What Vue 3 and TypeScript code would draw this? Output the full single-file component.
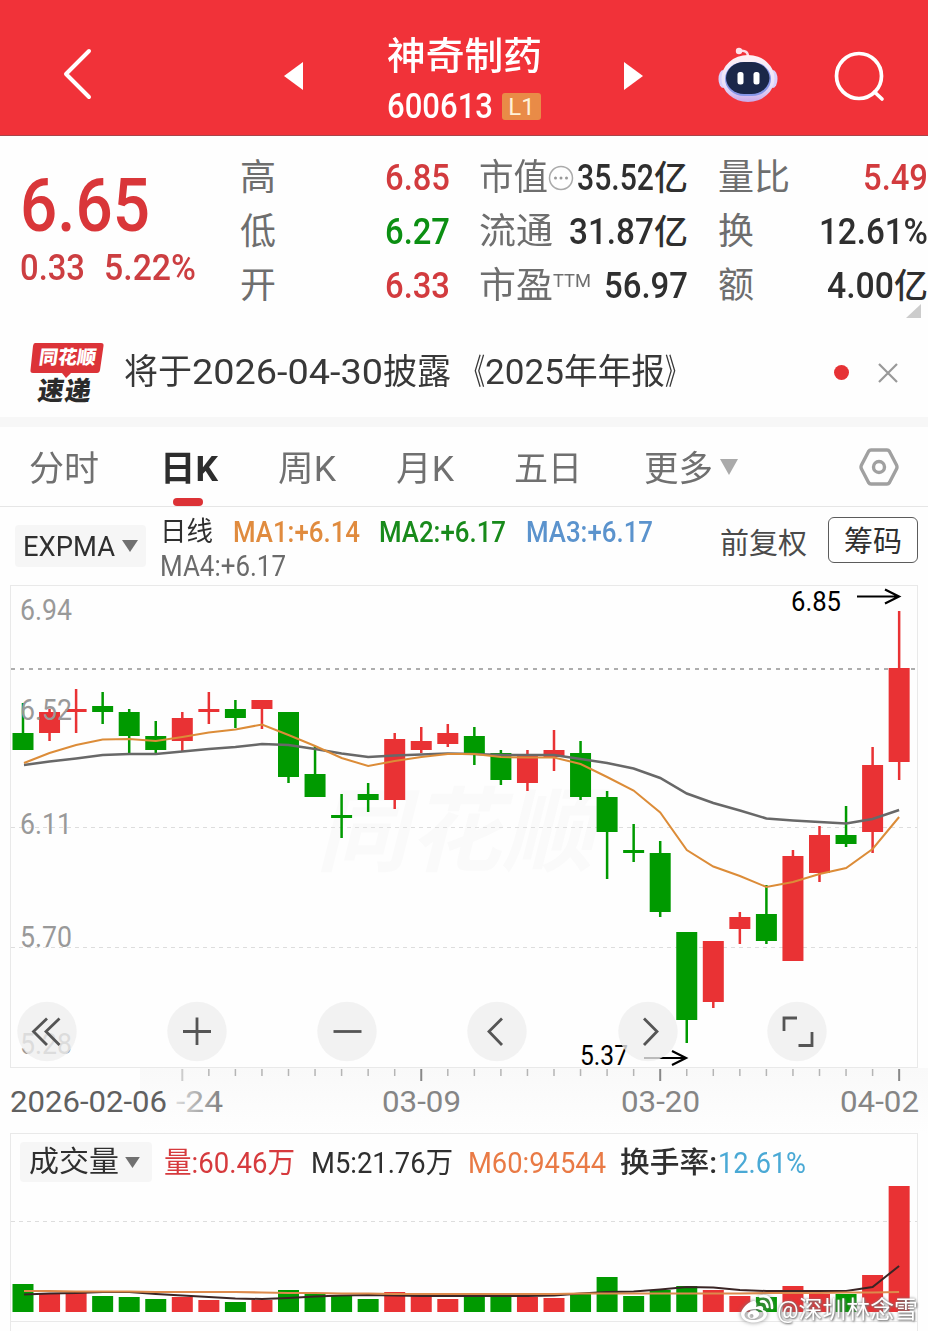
<script setup lang="ts">
type Candle = { up: boolean; top: number; bottom: number; high: number; low: number; vol: number }

// Scales a run of text horizontally so that it occupies the given width in the flow.
const vFit = {
  mounted(el: HTMLElement, binding: { value: number }) {
    const natural = el.getBoundingClientRect().width
    el.style.transform = `scaleX(${binding.value / natural})`
    el.style.marginRight = `${binding.value - natural}px`
  },
}

const rows: [number, number, number, number, number, number][] = [
  [0, 733, 750, 703, 750, 1284], [1, 712, 733, 709, 741, 1293], [1, 709, 712, 689, 733, 1293],
  [0, 706, 712, 692, 724, 1296], [0, 712, 736, 709, 753, 1297], [0, 736, 750, 721, 753, 1299],
  [1, 718, 741, 712, 751, 1297], [1, 709, 712, 692, 724, 1300], [0, 709, 718, 700, 728, 1302],
  [1, 700, 709, 700, 729, 1300], [0, 712, 777, 712, 783, 1290], [0, 774, 797, 746, 797, 1293],
  [0, 815, 818, 794, 838, 1296], [0, 794, 800, 783, 812, 1299], [1, 739, 800, 733, 809, 1292],
  [1, 741, 750, 727, 753, 1296], [1, 733, 744, 724, 747, 1299], [0, 736, 755, 727, 765, 1297],
  [0, 753, 780, 750, 785, 1296], [1, 754, 783, 750, 791, 1297], [1, 750, 757, 730, 771, 1298],
  [0, 753, 797, 741, 800, 1293], [0, 797, 832, 791, 879, 1277], [0, 850, 853, 824, 862, 1296],
  [0, 853, 912, 841, 917, 1290], [0, 932, 1020, 932, 1043, 1286], [1, 941, 1002, 941, 1008, 1290],
  [1, 917, 929, 912, 944, 1296], [0, 914, 941, 885, 944, 1297], [1, 856, 961, 850, 961, 1286],
  [1, 835, 873, 826, 882, 1294], [0, 835, 844, 806, 847, 1294], [1, 765, 832, 747, 853, 1275],
  [1, 668, 762, 611, 780, 1186],
]
const candles: Candle[] = rows.map(([up, top, bottom, high, low, vol]) => ({ up: up === 1, top, bottom, high, low, vol }))
const cx = (i: number) => 23 + i * 26.55
const color = (up: boolean) => (up ? '#e93234' : '#009a00')
const line = (ys: number[]) => ys.map((y, i) => `${(i ? cx(i) : 24).toFixed(1)},${y}`).join(' ')

const fast = line([763, 753, 745, 739.5, 739, 741, 737, 732.5, 729.5, 724.5, 735, 746, 758, 766, 761, 757, 754, 754, 757, 757.5, 757.5, 764, 777, 790.5, 812.5, 850, 866.5, 876, 887, 882, 874, 868, 849, 817])
const slow = line([765, 761.5, 758.5, 755, 754, 754, 751.5, 749, 747, 744, 745, 749, 753.5, 757, 755.5, 754.5, 753.5, 754, 755, 755, 755, 759, 763, 768.5, 778, 793.5, 803, 810.5, 818.5, 820.5, 822, 823.5, 819, 810])
const vol5 = line([1294.5, 1293.5, 1293, 1292, 1292, 1294, 1295.5, 1297, 1298.5, 1299, 1298, 1296.5, 1295.5, 1295, 1295.5, 1296, 1296, 1296, 1296, 1296, 1295.5, 1293.5, 1292, 1291.5, 1289.5, 1287, 1287.5, 1290, 1291, 1291, 1291, 1291, 1287, 1266])
const vol60 = line([1291, 1291, 1291.5, 1291.5, 1291.5, 1292, 1292, 1292, 1292, 1292.5, 1293, 1293, 1293.5, 1293.5, 1294, 1294, 1294, 1294, 1294, 1294, 1294, 1293.5, 1293.5, 1293.5, 1293.5, 1293.5, 1293.5, 1293.5, 1293, 1293, 1293, 1292.5, 1292.5, 1292])

const priceLabels = [
  { t: '6.94', y: 620 }, { t: '6.52', y: 720 }, { t: '6.11', y: 834 },
  { t: '5.70', y: 947 }, { t: '5.28', y: 1054 },
]
const ticks = Array.from({ length: 28 }, (_, k) => k + 6)
const dates = [{ t: '03-09', x: 383 }, { t: '03-20', x: 622 }, { t: '04-02', x: 841 }]

const news = [
  { t: '将于', w: 68 }, { t: '2026-04-30', w: 191 }, { t: '披露', w: 68 },
  { t: '《', w: 22, open: true }, { t: '2025', w: 79 }, { t: '年年报', w: 101 }, { t: '》', w: 22 },
]
const tabs = [
  { t: '分时', w: 70 }, { t: '日K', w: 58 }, { t: '周K', w: 58 },
  { t: '月K', w: 58 }, { t: '五日', w: 68 },
]
const tools = [
  'M47 1018.500L33.500 1031.500L47 1045M59.500 1018.500L46 1031.500L59.500 1045',
  'M183 1031.500H211M197 1017.500V1045',
  'M333.500 1031.500H361.500',
  'M502 1018.500L489 1031.500L502 1045',
  'M644 1018.500L657 1031.500L644 1045',
  'M784 1031V1018H797M798.500 1045.500H812V1032',
]
const centers = [47, 197, 347, 497, 648, 797]
</script>

<template>
  <main class="page">
    <header class="top">
      <svg class="back" width="32" height="54" viewBox="0 0 32 54"><path d="M29 4L6 27L29 50" /></svg>
      <svg class="tri" width="19" height="28" viewBox="0 0 19 28"><path d="M0 14L19 0V28Z" /></svg>
      <div class="stock">
        <div class="name"><span v-fit="155" class="fit">神奇制药</span></div>
        <div class="code"><span v-fit="106" class="fit">600613</span><b>L1</b></div>
      </div>
      <svg class="tri next" width="19" height="28" viewBox="0 0 19 28"><path d="M19 14L0 0V28Z" /></svg>
      <svg class="bot" width="60" height="56" viewBox="0 0 60 56">
        <defs>
          <linearGradient id="shell" x1="0" y1="0" x2="0" y2="1"><stop offset="0" stop-color="#fff2f5" /><stop offset=".65" stop-color="#e9dff9" /><stop offset="1" stop-color="#c9a9e8" /></linearGradient>
        </defs>
        <path d="M21 4Q31 2 30 12" fill="none" stroke="#ffd9e4" stroke-width="2.500" />
        <circle cx="21" cy="4" r="3.200" fill="#ffe2ea" />
        <ellipse cx="5" cy="32" rx="4.500" ry="9" fill="#d9d0fb" />
        <ellipse cx="55" cy="32" rx="4.500" ry="9" fill="#d9d0fb" />
        <ellipse cx="30" cy="31.500" rx="26.500" ry="23.500" fill="url(#shell)" />
        <rect x="7" y="15" width="46" height="34" rx="19" fill="#8797e8" />
        <rect x="8" y="15" width="43.500" height="32" rx="18" fill="#1b2749" />
        <rect x="19.500" y="25" width="6" height="12.500" rx="2.500" fill="#fff" />
        <rect x="35.500" y="25" width="6" height="12.500" rx="2.500" fill="#fff" />
      </svg>
      <svg class="search" width="52" height="52" viewBox="0 0 52 52"><circle cx="25" cy="25" r="22.500" /><path d="M40.500 41L48 48" /></svg>
    </header>

    <section class="quote">
      <div class="last">
        <div class="price"><span v-fit="130" class="fit">6.65</span></div>
        <div class="delta"><span v-fit="65" class="fit">0.33</span><span v-fit="92" class="fit">5.22%</span></div>
      </div>
      <dl class="col c1">
        <div><dt>高</dt><dd class="red"><span v-fit="65" class="fit">6.85</span></dd></div>
        <div><dt>低</dt><dd class="green"><span v-fit="65" class="fit">6.27</span></dd></div>
        <div><dt>开</dt><dd class="red"><span v-fit="65" class="fit">6.33</span></dd></div>
      </dl>
      <dl class="col c2">
        <div>
          <dt><span v-fit="69" class="fit">市值</span><svg class="more" width="26" height="26" viewBox="0 0 26 26"><circle cx="13" cy="13" r="11.500" fill="none" stroke="#aaa" stroke-width="1.500" /><circle cx="7.500" cy="13" r="1.500" /><circle cx="13" cy="13" r="1.500" /><circle cx="18.500" cy="13" r="1.500" /></svg></dt>
          <dd><span v-fit="77" class="fit">35.52</span><i>亿</i></dd>
        </div>
        <div><dt><span v-fit="74" class="fit">流通</span></dt><dd><span v-fit="85" class="fit">31.87</span><i>亿</i></dd></div>
        <div><dt><span v-fit="74" class="fit">市盈</span><sup v-fit="38" class="fit">TTM</sup></dt><dd><span v-fit="84" class="fit">56.97</span></dd></div>
      </dl>
      <dl class="col c3">
        <div><dt>量比</dt><dd class="red"><span v-fit="65" class="fit">5.49</span></dd></div>
        <div><dt>换</dt><dd><span v-fit="109" class="fit">12.61%</span></dd></div>
        <div><dt>额</dt><dd><span v-fit="67" class="fit">4.00</span><i>亿</i></dd></div>
      </dl>
      <i class="corner"></i>
    </section>

    <section class="news">
      <div class="brand">
        <svg width="76" height="38" viewBox="0 0 76 38"><path d="M6 1H72Q75 1 74.500 4L71 28Q70.500 31 68 31H42L37 36L33 31H4Q1 31 1.500 28L4 4Q4.500 1 6 1Z" fill="#dc3338" /></svg>
        <span class="b1">同花顺</span><span class="b2">速递</span>
      </div>
      <p><span v-for="p in news" :key="p.t" v-fit="p.w" class="fit" :class="{ open: p.open }">{{ p.t }}</span></p>
      <i class="dot"></i>
      <svg class="close" width="22" height="22" viewBox="0 0 22 22"><path d="M2 2L20 20M20 2L2 20" /></svg>
    </section>

    <nav class="tabs">
      <a v-for="(t, i) in tabs" :key="t.t" :class="{ on: i === 1 }"><span v-fit="t.w" class="fit">{{ t.t }}</span></a>
      <a class="pick"><span v-fit="69" class="fit">更多</span><svg width="18" height="16" viewBox="0 0 18 16"><path d="M0 0H18L9 16Z" fill="#aaa" /></svg></a>
      <svg class="gear" width="40" height="40" viewBox="0 0 40 40"><path d="M12 3H28Q29.500 3 30.500 4.500L37.500 18Q38.500 20 37.500 22L30.500 35.500Q29.500 37 28 37H12Q10.500 37 9.500 35.500L2.500 22Q1.500 20 2.500 18L9.500 4.500Q10.500 3 12 3Z" /><circle cx="20" cy="20" r="5.500" /></svg>
    </nav>

    <section class="indicator">
      <button class="drop"><span v-fit="92" class="fit">EXPMA</span><svg width="16" height="12" viewBox="0 0 16 12"><path d="M0 0H16L8 12Z" /></svg></button>
      <div class="ma">
        <div><span v-fit="53" class="fit day">日线</span><span v-fit="127" class="fit m1">MA1:+6.14</span><span v-fit="127" class="fit m2">MA2:+6.17</span><span v-fit="127" class="fit m3">MA3:+6.17</span></div>
        <div><span v-fit="126" class="fit m4">MA4:+6.17</span></div>
      </div>
      <span class="adj">前复权</span>
      <button class="chips">筹码</button>
    </section>

    <section class="chart">
      <svg width="928" height="548" viewBox="0 585 928 548">
        <defs>
          <linearGradient id="fade" gradientUnits="userSpaceOnUse" x1="176" y1="0" x2="222" y2="0"><stop offset="0" stop-color="#ddd" /><stop offset=".35" stop-color="#bbb" /><stop offset="1" stop-color="#808080" /></linearGradient>
          <linearGradient id="shade" x1="0" y1="0" x2="0" y2="1"><stop offset="0" stop-color="#f9f9f9" /><stop offset="1" stop-color="#fefefe" /></linearGradient>
        </defs>
        <rect x="140" y="1068" width="788" height="65" fill="url(#shade)" />
        <text class="ghost" x="316" y="864" textLength="278">同花顺</text>
        <rect x="10.500" y="585.500" width="907" height="482" fill="none" stroke="#e9e9e9" />
        <path d="M11 827.500H917M11 947.500H917" stroke="#ddd" stroke-dasharray="4 4" />
        <path d="M11 669H917" stroke="#929292" stroke-width="1.500" stroke-dasharray="4 5" />
        <g v-for="(c, i) in candles" :key="i" :fill="color(c.up)">
          <rect :x="cx(i) - 1.250" :y="c.high" width="2.500" :height="c.low - c.high" />
          <rect :x="cx(i) - 10.500" :y="c.top" width="21" :height="c.bottom - c.top" />
        </g>
        <polyline :points="slow" fill="none" stroke="#686868" stroke-width="2.500" />
        <polyline :points="fast" fill="none" stroke="#dc8c38" stroke-width="2" />
        <text v-for="p in priceLabels" :key="p.t" class="num price-tag" x="20" :y="p.y" textLength="52" lengthAdjust="spacingAndGlyphs">{{ p.t }}</text>
        <text class="num note" x="791" y="611" textLength="50" lengthAdjust="spacingAndGlyphs">6.85</text>
        <path class="arrow" d="M857 596.500H899M885 589.500L899 596.500L885 603.500" />
        <text class="num note" x="580" y="1064.500" textLength="48" lengthAdjust="spacingAndGlyphs">5.37</text>
        <path class="arrow" d="M644 1058H686M672 1051L686 1058L672 1065" />
        <g v-for="(d, i) in tools" :key="d" class="tool">
          <circle :cx="centers[i]" cy="1031.500" r="29.700" />
          <path :d="d" />
        </g>
        <path v-for="i in ticks" :key="i" :d="`M${cx(i)} 1069V${i % 9 === 6 ? 1081 : 1076}`" :stroke="i === 6 ? '#ccc' : i % 9 === 6 ? '#888' : '#b5b5b5'" :stroke-width="i % 9 === 6 ? 2 : 1.500" />
        <text class="num date first" x="10" y="1112" textLength="157" lengthAdjust="spacingAndGlyphs">2026-02-06</text>
        <text class="num date" x="176" y="1112" textLength="47" lengthAdjust="spacingAndGlyphs" fill="url(#fade)">-24</text>
        <text v-for="d in dates" :key="d.t" class="num date" :x="d.x - 1" y="1112" textLength="79" lengthAdjust="spacingAndGlyphs" fill="#858585">{{ d.t }}</text>
      </svg>
    </section>

    <section class="volume">
      <div class="legend">
        <button class="drop vol"><span v-fit="90" class="fit">成交量</span><svg width="15" height="11" viewBox="0 0 16 12"><path d="M0 0H16L8 12Z" /></svg></button>
        <span v-fit="131" class="fit v1">量:60.46万</span>
        <span v-fit="142" class="fit v2">M5:21.76万</span>
        <span v-fit="138" class="fit v3">M60:94544</span>
        <span v-fit="97" class="fit v4">换手率:</span>
        <span v-fit="88" class="fit v5">12.61%</span>
      </div>
      <svg width="906" height="137" viewBox="11 1184 906 137">
        <path d="M11 1221.500H917" stroke="#ddd" stroke-dasharray="4 4" />
        <rect v-for="(c, i) in candles" :key="i" :x="cx(i) - 10.500" :y="c.vol" width="21" :height="1312 - c.vol" :fill="color(c.up)" />
        <polyline :points="vol5" fill="none" stroke="#3a2525" stroke-width="2" />
        <polyline :points="vol60" fill="none" stroke="#dd8a4c" stroke-width="2.200" />
      </svg>
    </section>
    <div class="below"></div>

    <div class="credit">
      <svg width="34" height="30" viewBox="0 0 34 30">
        <path fill-rule="evenodd" d="M13 7C8 8 1 15 1 20C1 26 8 28.500 14 28.500C21 28.500 27 24.500 27 20C27 17.500 25 16.500 23 16C24 12 21 11 16 13C17 9 16 6.500 13 7ZM14 15C20 14.500 23.500 17 23.500 20C23.500 23.500 19 26 13.500 26C8 26 4.500 24 4.500 21C4.500 18 8.500 15.500 14 15Z" />
        <path fill-rule="evenodd" d="M13 16.500C9 17 7 20 8 22.500C9 25 13 25.500 16 24C19 22.500 20 20 18.500 18C17.500 16.500 15 16 13 16.500ZM11.500 20A2 2 0 1 0 11.500 24A2 2 0 1 0 11.500 20Z" />
        <path d="M21 7.500Q26.500 6.500 27.500 13M20 2.500Q32 0 32 14" fill="none" stroke="#fff" stroke-width="2.600" stroke-linecap="round" />
      </svg>
      <span v-fit="141" class="fit">@深圳林念雪</span>
    </div>
  </main>
</template>

<style>
body { background: #fff; }
</style>

<style scoped>
* { box-sizing: border-box; }
.page { position: relative; width: 928px; height: 1331px; overflow: hidden; background: #fefefe; color: #2f2f2f; font-family: Roboto, "Noto Sans CJK SC", sans-serif; }
.fit { display: inline-block; flex: none; white-space: nowrap; transform-origin: left center; }
i { font-style: normal; }
svg { display: block; flex: none; }
button { border: 0; padding: 0; margin: 0; font: inherit; color: inherit; }

.top { height: 136px; display: flex; align-items: flex-start; background: #f13239; border-bottom: 1px solid #a8454a; color: #fff; }
.back { margin: 47px 0 0 60px; fill: none; stroke: #fff; stroke-width: 4; stroke-linecap: round; stroke-linejoin: round; }
.tri { margin: 62px 0 0 192px; fill: #fff; }
.tri.next { margin-left: 82px; }
.stock { margin-left: 84px; width: 155px; }
.name { display: flex; height: 50px; margin-top: 31px; font-size: 38px; line-height: 50px; font-weight: 500; }
.code { display: flex; align-items: center; margin-top: 7px; height: 38px; font-size: 35px; line-height: 38px; font-weight: 500; }
.code b { flex: none; margin: -1px 0 0 9px; width: 39px; height: 27px; border-radius: 3px; background: #e98b47; font-size: 24px; line-height: 28px; font-weight: 400; text-align: center; color: #fff2d8; }
.bot { margin: 47px 0 0 75px; }
.search { margin: 51px 0 0 56px; fill: none; stroke: #fff; stroke-width: 3.700; stroke-linecap: round; }

.quote { position: relative; height: 189px; display: flex; align-items: flex-start; }
.last { width: 240px; padding: 28px 0 0 20px; color: #d93639; }
.price { display: flex; height: 83px; font-size: 75px; line-height: 82px; font-weight: 500; }
.delta { display: flex; gap: 19px; height: 42px; font-size: 37px; line-height: 42px; font-weight: 500; color: #cc3e41; }
.col { margin: 0; padding-top: 15px; }
.col > div { height: 54px; display: flex; justify-content: space-between; align-items: center; line-height: 54px; }
.c1 { width: 210px; }
.c2 { width: 209px; margin-left: 29px; }
.c3 { width: 210px; margin-left: 30px; margin-right: -1px; }
dt { display: flex; align-items: center; font-size: 36px; color: #6e6e6e; font-weight: 400; }
dd { display: flex; margin: 0; font-size: 37px; font-weight: 500; }
dd i { font-size: 34px; font-weight: 500; }
dt sup { font-size: 18px; line-height: 24px; margin-top: -11px; vertical-align: baseline; }
.more { fill: #999; }
.red { color: #d23b3e; }
.green { color: #0b8f12; }
.corner { position: absolute; right: 7px; top: 168px; border-left: 15px solid transparent; border-bottom: 14px solid #ccc; }

.news { height: 102px; display: flex; align-items: flex-start; border-bottom: 10px solid #f7f7f7; }
.brand { position: relative; margin: 17px 0 0 29px; width: 95px; height: 64px; }
.b1, .b2 { position: absolute; font-weight: 900; white-space: nowrap; transform: skewX(-8deg); }
.b1 { left: 10px; top: 4px; font-size: 19px; line-height: 24px; color: #fff; }
.b2 { left: 9px; top: 33px; font-size: 26px; line-height: 32px; letter-spacing: 1px; color: #2b2b2b; }
.news p { display: flex; margin: 23px 0 0; width: 710px; font-size: 35px; line-height: 50px; color: #383838; }
.open { margin-left: 12px; }
.dot { width: 15px; height: 15px; margin-top: 40px; border-radius: 50%; background: #e63235; }
.close { margin: 37px 0 0 28px; fill: none; stroke: #999; stroke-width: 2.200; }

.tabs { display: flex; height: 80px; padding-left: 29px; border-bottom: 1px solid #e6e6e6; font-size: 35px; line-height: 85px; color: #707070; }
.tabs a { position: relative; display: flex; width: 118px; }
.tabs a.on { color: #2d2d2d; font-weight: 700; }
.tabs a:first-child { width: 131px; }
.tabs a:nth-child(5) { width: 130px; }
.tabs a.on::after { content: ""; position: absolute; left: 13px; bottom: 0; width: 30px; height: 8px; border-radius: 4px; background: #dc3236; }
.tabs .pick { width: 215px; }
.pick svg { margin: 32px 0 0 7px; }
.gear { margin-top: 20px; fill: none; stroke: #a0a0a0; stroke-width: 3.400; }

.indicator { display: flex; align-items: flex-start; height: 78px; }
.drop { display: flex; align-items: center; margin: 18px 0 0 15px; padding-left: 8px; width: 131px; height: 42px; border-radius: 4px; background: #f6f6f6; font-size: 28px; }
.drop svg { margin-left: 7px; fill: #707070; }
.ma { margin: 8px 0 0 14px; width: 560px; font-size: 29px; line-height: 34px; font-weight: 400; }
.ma div { display: flex; height: 34px; }
.day { margin-left: 0; font-size: 27px; }
.m1, .m2, .m3 { font-weight: 500; }
.m1 { margin-left: 20px; color: #e08b3e; }
.m2 { margin-left: 19px; color: #188a1b; }
.m3 { margin-left: 20px; color: #5b93cd; }
.m4 { color: #6b6b6b; }
.adj { width: 108px; margin-top: 16px; font-size: 29px; line-height: 42px; color: #4a4a4a; }
.chips { width: 90px; height: 46px; margin-top: 10px; padding-top: 3px; border: 1px solid #5c5c5c; border-radius: 6px; background: #fff; font-size: 29px; line-height: 42px; }

.chart { height: 548px; }
.num { font-family: Roboto, sans-serif; }
.price-tag { font-size: 29px; fill: #999; }
.note { font-size: 27px; fill: #000; }
.arrow { fill: none; stroke: #000; stroke-width: 2.200; }
.date { font-size: 29px; }
.first { fill: #606060; }
.ghost { font-size: 92px; font-weight: 700; font-style: italic; fill: #fafafa; }
.tool circle { fill: #eee; fill-opacity: .78; }
.tool path { fill: none; stroke: #555; stroke-width: 2.800; }

.volume { margin: 0 10px; width: 908px; height: 189px; border: 1px solid #e9e9e9; }
.legend { display: flex; height: 50px; align-items: flex-start; font-size: 29px; line-height: 58px; }
.drop.vol { width: 132px; height: 40px; margin: 8px 12px 0 9px; padding-left: 9px; font-size: 29px; line-height: 43px; }
.drop.vol svg { margin-left: 6px; }
.v1 { color: #d63a3d; }
.v2 { margin-left: 16px; }
.v3 { margin-left: 15px; color: #e97a45; }
.v4 { margin-left: 14px; font-weight: 500; }
.v5 { margin-left: 1px; color: #4aa9d5; }
.below { margin: 0 10px; height: 9px; border: solid #e9e9e9; border-width: 0 1px; }

.credit { position: absolute; left: 740px; top: 1291px; display: flex; align-items: center; gap: 3px; height: 38px; font-size: 24px; line-height: 38px; color: #fff; fill: #fff; text-shadow: 0 0 3px #777, 1px 1px 2px #777; }
.credit svg { filter: drop-shadow(0 0 2px #777); margin-top: -3px; }
</style>
